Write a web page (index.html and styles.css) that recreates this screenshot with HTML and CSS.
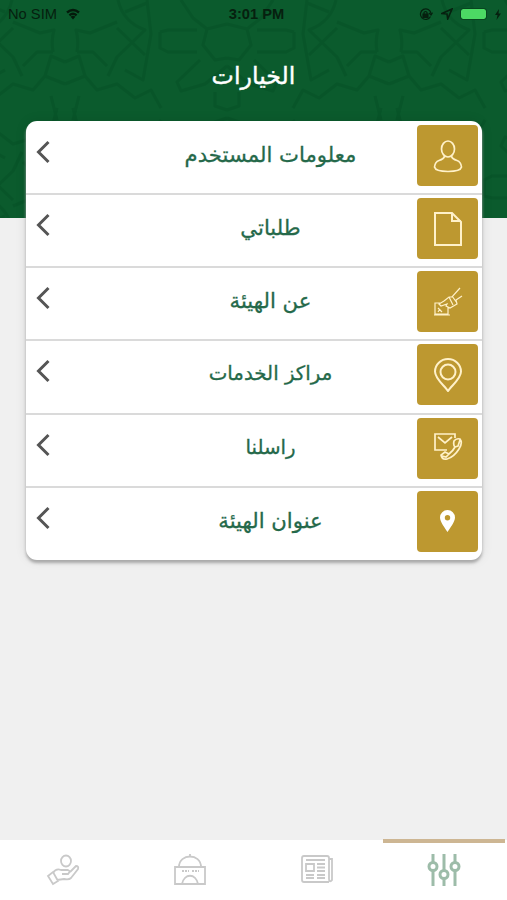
FILE: index.html
```html
<!DOCTYPE html>
<html lang="ar">
<head>
  <meta charset="utf-8">
  <title>الخيارات</title>
  <link rel="stylesheet" href="styles.css">
</head>
<body>

  <header class="header">
    <svg class="pattern" width="507" height="218" viewBox="0 0 507 218">
      <defs>
        <g id="half">
          <path d="M12 52Q14 40 11 30L25 33L52 22M12 52L28 52L42 66M52 28L80 55M53 0Q58 22 80 30L52 57L43 76M60 12L82 3M82 0L86 34L78 80L60 70M95 32L103 30L132 30M95 32V48L103 52H132M116 0L128 18L142 29L162 24M142 29L138 45L150 60L162 58M135 60L112 82L116 91L140 84L162 66M0 62L14 56L20 76L0 84M20 76L32 90L52 84L70 98L86 90L96 108M150 92V106L162 110M14 96L8 120"/>
        </g>
        <g id="tile">
          <use href="#half"/>
          <use href="#half" transform="scale(-1 1)"/>
        </g>
        <g id="strip">
          <use href="#tile" x="65"/>
          <use href="#tile" x="389"/>
        </g>
      </defs>
      <use href="#strip"/>
      <use href="#strip" transform="translate(0 228) scale(1 -1)"/>
    </svg>

    <div class="status">
      <div class="carrier">
        <span>No SIM</span>
        <svg width="14" height="12" viewBox="0 0 14 12" fill="none" stroke="#041a0b" stroke-width="2.4">
          <path d="M1 4.500Q7-.5 13 4.500M3.400 7.300Q7 4.300 10.600 7.300"/>
          <path d="M4.600 8.700Q7 7 9.400 8.700L7 11.500Z" fill="#041a0b" stroke="none"/>
        </svg>
      </div>
      <div class="time">3:01 PM</div>
      <div class="indicators">
        <svg width="14" height="13" viewBox="0 0 14 13" fill="none" stroke="#06200f" stroke-width="1.200">
          <path d="M11.500 8.500A5.300 5.300 0 1 1 12 5.500M10 5L12 7L13.500 4.700"/>
          <path d="M4 6h5v3.500H4z" fill="#06200f"/>
          <path d="M5 6V4.500Q6.500 2.500 8 4.500V6"/>
        </svg>
        <svg width="12" height="12" viewBox="0 0 12 12" fill="none" stroke="#06200f" stroke-width="1.600">
          <path d="M11 1L1 5.500L6 6L6.700 11Z"/>
        </svg>
        <span class="battery"></span>
        <svg width="8" height="11" viewBox="0 0 8 11"><path d="M5 0L1 6H3.500L2.500 11L7 4.500H4.500Z" fill="#06200f"/></svg>
      </div>
    </div>
    <h1>الخيارات</h1>
  </header>

  <main class="card">
    <a class="row">
      <svg class="arrow" viewBox="0 0 14 24"><path d="M12.500 2L2.500 12L12.500 22"/></svg>
      <span class="label">معلومات المستخدم</span>
      <span class="tile"><svg viewBox="0 0 30 34">
        <ellipse cx="15" cy="10" rx="6.500" ry="8"/>
        <path d="M11.500 17Q11 20 6 21.500Q2 23 1.500 28C3 34 27 34 28.500 28Q28 23 24 21.500Q19 20 18.500 17"/>
      </svg></span>
    </a>
    <a class="row">
      <svg class="arrow" viewBox="0 0 14 24"><path d="M12.500 2L2.500 12L12.500 22"/></svg>
      <span class="label">طلباتي</span>
      <span class="tile"><svg viewBox="0 0 30 34">
        <path d="M2 1H19L28 10V33H2ZM19 1V9H28" stroke-width="2"/>
      </svg></span>
    </a>
    <a class="row">
      <svg class="arrow" viewBox="0 0 14 24"><path d="M12.500 2L2.500 12L12.500 22"/></svg>
      <span class="label">عن الهيئة</span>
      <span class="tile"><svg viewBox="0 0 30 34" class="thin">
        <path d="M27 3L19 12L16 12L11 16L6 19L8 21L14 19L13 21L17 23L24 19L23 15L29 11M16 12L20 20M19 11L24 18M8 18H2V29H15V22M1 30H17M5 23L9 27M5 27L7 24"/>
      </svg></span>
    </a>
    <a class="row">
      <svg class="arrow" viewBox="0 0 14 24"><path d="M12.500 2L2.500 12L12.500 22"/></svg>
      <span class="label narrow">مراكز الخدمات</span>
      <span class="tile"><svg viewBox="0 0 30 34">
        <path d="M15 33C12 28 2 21 2 13.500A13 12.500 0 0 1 28 13.500C28 21 18 28 15 33Z" stroke-width="2"/>
        <circle cx="15" cy="14" r="7.500" stroke-width="2"/>
      </svg></span>
    </a>
    <a class="row">
      <svg class="arrow" viewBox="0 0 14 24"><path d="M12.500 2L2.500 12L12.500 22"/></svg>
      <span class="label narrow">راسلنا</span>
      <span class="tile"><svg viewBox="0 0 30 34">
        <path d="M14 19H2V3H22V7M5 6L12 12L19 6"/>
        <path d="M21 10Q23 7 27 8Q30 12 26 18Q21 26 14 28Q9 29 8 24L12 21L16 23Q20 20 22 16Q20 14 21 10ZM9 25L13 26L16 23M22 16L25 15L27 9"/>
      </svg></span>
    </a>
    <a class="row">
      <svg class="arrow" viewBox="0 0 14 24"><path d="M12.500 2L2.500 12L12.500 22"/></svg>
      <span class="label">عنوان الهيئة</span>
      <span class="tile"><svg viewBox="0 0 30 34">
        <path class="solid" fill-rule="evenodd" d="M14.500 28C12 24 7 18 7 13.500A7.500 7.500 0 0 1 22 13.500C22 18 17 24 14.500 28ZM14.500 11A2.700 2.700 0 1 0 14.500 16.400A2.700 2.700 0 1 0 14.500 11Z"/>
      </svg></span>
    </a>
  </main>

  <nav class="tabs">
    <a class="tab">
      <svg viewBox="0 0 34 34">
        <ellipse cx="20" cy="8" rx="5" ry="5.500"/>
        <path d="M2 23L7 19L12 28L7 31ZM7 20Q10 15 15 17H22Q25 18 22 21H16M24 19L30 13Q33 13 32 16L25 25Q23 27 18 26L11 27"/>
      </svg>
    </a>
    <a class="tab">
      <svg viewBox="0 0 34 34">
        <path d="M2 14H32V31H2ZM6 14C6 0 28 0 28 14M17 3V1M9 31C11 20 23 20 25 31"/>
        <path d="M9 18H16M19 18H26" stroke-dasharray="2 1"/>
      </svg>
    </a>
    <a class="tab">
      <svg viewBox="0 0 34 34">
        <path d="M29 29H4Q2 29 2 27V5Q2 3 4 3H27Q29 3 29 5V26Q29 30 32 27V6H29"/>
        <path d="M6 11H14V18H6ZM6 7H25M17 11H25M17 14.500H25M17 18H25M6 22H14M17 22H25M6 25H14M17 25H25"/>
      </svg>
    </a>
    <a class="tab active">
      <svg viewBox="0 0 34 34">
        <path d="M6 1V9M6 18V33M17 1V17M17 26V33M28 1V9M28 18V33"/>
        <circle cx="6" cy="13.500" r="4"/>
        <circle cx="17" cy="21.500" r="4"/>
        <circle cx="28" cy="13.500" r="4"/>
      </svg>
    </a>
  </nav>

</body>
</html>
```
FILE: styles.css
```css
* { box-sizing: border-box; }
body { margin: 0; height: 900px; display: flex; flex-direction: column; background: #f0f0f0; font-family: "DejaVu Sans", sans-serif; overflow: hidden; }

.header { position: relative; height: 218px; flex: none; background: #0b5b2d; overflow: hidden; }
.pattern { position: absolute; left: 0; top: 0; fill: none; stroke: #064f26; stroke-width: 3; stroke-linejoin: round; opacity: .45; }
.status { position: relative; display: grid; grid-template-columns: 1fr auto 1fr; align-items: center; height: 28px; padding: 0 5px 0 8px; color: #06200f; font: 14.7px "Liberation Sans", sans-serif; }
.carrier { display: flex; align-items: center; gap: 9px; }
.time { font-weight: bold; padding-left: 3px; }
.indicators { display: flex; align-items: center; justify-content: flex-end; gap: 8px; }
.battery { width: 25px; height: 10px; border-radius: 2px; background: #4cd964; outline: 1px solid #08461f; }
h1 { position: relative; margin: 31px 0 0; text-align: center; color: #fff; font-size: 23.7px; font-weight: normal; line-height: 34px; -webkit-text-stroke: .4px #fff; }

.card { position: relative; width: 456px; height: 439px; flex: none; margin: -97px 0 0 26px; display: grid; grid-template-rows: repeat(6, 1fr); background: #fff; border-radius: 11px; box-shadow: 0 3px 3px #aaa, 0 0 12px rgba(0,0,0,.1); }
.row { display: flex; align-items: flex-start; padding: 4px 4px 0 10px; }
.row + .row { position: relative; top: -1px; border-top: 2px solid #dadada; padding-top: 3px; }
.arrow { width: 14px; height: 24px; margin-top: 15px; fill: none; stroke: #555; stroke-width: 3; }
.label { flex: 1; margin-left: 74px; text-align: center; color: #25694a; font-size: 21.2px; line-height: 60px; white-space: nowrap; -webkit-text-stroke: .3px #25694a; }
.narrow { font-size: 19.8px; }
.tile { display: flex; align-items: center; justify-content: center; width: 61px; height: 61px; background: #bd9830; border-radius: 4px; }
.tile svg { width: 30px; height: 34px; fill: none; stroke: #fff1c9; stroke-width: 1.7; }
.tile .thin { stroke-width: 1.2; }
.tile .solid { fill: #fff; stroke: none; }

.tabs { display: grid; grid-template-columns: repeat(4, 1fr); height: 60px; margin-top: auto; background: #fff; }
.tab { display: flex; align-items: center; justify-content: center; }
.tab svg { width: 34px; height: 34px; fill: none; stroke: #c9c9c9; stroke-width: 1.8; }
.active { margin: 0 2px 0 3px; box-shadow: 0 -1px #cdb693, inset 0 3px #cdb693; }
.active svg { stroke: #9dbca9; stroke-width: 3; }
```
